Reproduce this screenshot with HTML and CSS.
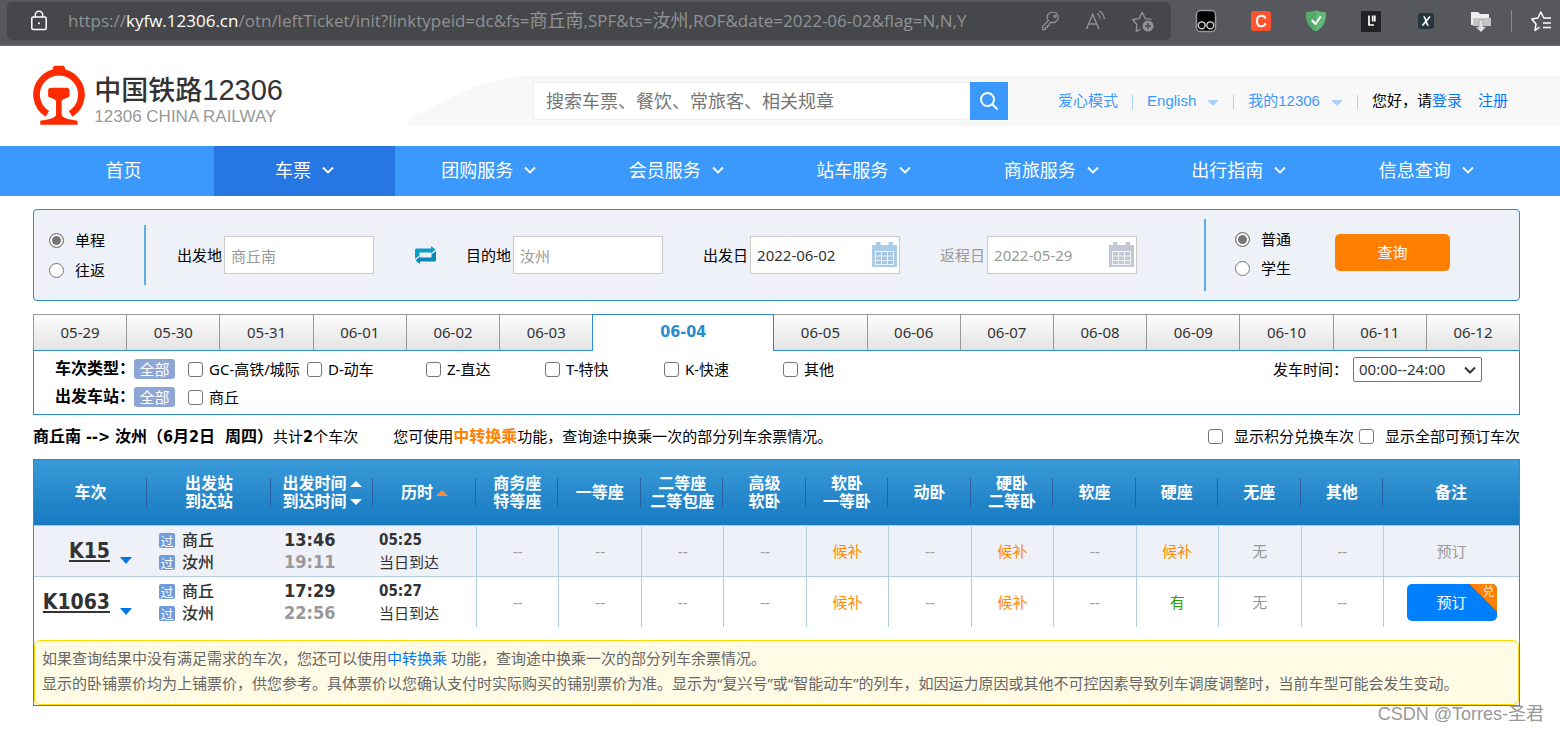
FILE: index.html
```html
<!DOCTYPE html>
<html lang="zh-CN">
<head>
<meta charset="utf-8">
<title>中国铁路12306</title>
<link rel="stylesheet" href="styles.css">
</head>
<body>
<div class="browser">
  <div class="address">
    <svg class="lock" width="18" height="22" viewBox="0 0 18 22" fill="none" stroke="#fff" stroke-width="1.5"><rect x="1.8" y="7" width="14.4" height="12.500" rx="1.500"/><path d="M5.300 7V5a3.700 3.700 0 0 1 7.400 0v2"/><circle cx="9" cy="13.200" r="1" fill="#fff" stroke="none"/></svg>
    <span class="url">https://<span class="host">kyfw.12306.cn</span>/otn/leftTicket/init?linktypeid=dc&amp;fs=<span class="url-cn">商丘南</span>,SPF&amp;ts=<span class="url-cn">汝州</span>,ROF&amp;date=2022-06-02&amp;flag=N,N,Y</span>
    <span class="address-tools">
      <svg width="20" height="22" viewBox="0 0 20 22" fill="none" stroke="#919295" stroke-width="1.300"><path d="M12.500 2.200a5.200 5.200 0 1 1-2.600 9.900L8.300 13.700v2H6.200v2H4.300v2H1.600v-3.300l5.800-5.800A5.200 5.200 0 0 1 12.500 2.200z" stroke-linejoin="round"/><circle cx="14" cy="6.200" r="1.100"/></svg>
      <svg width="22" height="22" viewBox="0 0 22 22" fill="none" stroke="#919295" stroke-width="1.400"><path d="M1.500 19 7.700 4.200 13.900 19M3.800 14h7.800"/><path d="M12 3.500c1.900 1.100 3 2.700 3.300 5M14.300 1c3 1.700 4.800 4.500 5.100 8"/></svg>
      <svg width="24" height="24" viewBox="0 0 24 24" fill="none" stroke="#919295" stroke-width="1.400" stroke-linejoin="round"><path d="M9.500 20.200 5.200 22.300l.8-6.600L1.600 10.800l6.400-1.200 3.200-6.300 3.100 6.300 6.400.8"/><circle cx="17" cy="17" r="5.500" fill="#919295" stroke="none"/><path d="M17 14v6M14 17h6" stroke="#46474a"/></svg>
    </span>
  </div>
  <div class="extensions">
    <svg width="22" height="24" viewBox="0 0 22 24"><rect x="1.500" y="1.500" width="19" height="21" rx="4" fill="#000" stroke="#999" stroke-width="1.500"/><g fill="#111" stroke="#ddd" stroke-width="1.300"><circle cx="6.700" cy="16.300" r="3.500"/><circle cx="15.300" cy="16.300" r="3.500"/></g></svg>
    <svg width="22" height="24" viewBox="0 0 22 24"><rect x="1" y="2" width="20" height="20" rx="3" fill="#ff5330"/><path d="M15.500 9.500C14.800 7.500 13.300 6.700 11.400 6.700 8.800 6.700 7 8.700 7 12s1.700 5.300 4.300 5.300c2.100 0 3.700-1 4.300-3" fill="none" stroke="#fff" stroke-width="2"/></svg>
    <svg width="22" height="24" viewBox="0 0 22 24"><path d="M11 1.500c3 1.200 6.500 1.600 10 1.700C21.300 12 18.500 18.500 11 22.500 3.500 18.500.7 12 1 3.200c3.500-.1 7-.5 10-1.700z" fill="#63b877"/><path d="M11 1.500c-3 1.200-6.500 1.600-10 1.700C.7 12 3.500 18.500 11 22.500z" fill="#56a96a"/><path d="m6.800 11 3.500 4 5.500-7.500" fill="none" stroke="#fff" stroke-width="2"/></svg>
    <svg width="22" height="24" viewBox="0 0 22 24"><rect x="1" y="2" width="20" height="21" fill="#222"/><path d="M9 6.500v9.500h5M12.700 6.500v6M14.800 6.500v6" fill="none" stroke="#fff" stroke-width="1.700"/></svg>
    <svg width="22" height="24" viewBox="0 0 22 24"><rect x="3" y="4" width="16" height="16" rx="3" fill="#26363f"/><path d="M8.500 7.500c2 0 3 9 5 9M15 7.500 7.500 16.500" fill="none" stroke="#fff" stroke-width="1.700"/></svg>
    <svg width="22" height="24" viewBox="0 0 22 24"><path d="M1 3h7l2 2h9v11H1z" fill="#eee"/><path d="M3 9h18v8H3z" fill="#c4c4c4"/><path d="M9 11h4v7h3l-5 5-5-5h3z" fill="#ddd" stroke="#999" stroke-width=".6"/></svg>
  </div>
  <span class="bar-divider"></span>
  <svg class="favorites" width="24" height="24" viewBox="0 0 24 24" fill="none" stroke="#fff" stroke-width="1.500" stroke-linejoin="round"><path d="M9.500 18.200 5 21.500 6 15 1.700 10 8 9l2.800-6 3 6H21M13 14h8M13 18.500h8"/></svg>
</div>

<header class="header">
  <a class="logo" href="#">
    <svg width="54" height="62" viewBox="0 0 54 62"><path d="M20 6V2.500L21.500.500h9.500L32.500 2.500V6z" fill="#ff2b00"/><path d="M14.500 49A22.700 22.700 0 1 1 38.100 49" fill="none" stroke="#ff2b00" stroke-width="6.800"/><path d="M15.300 26c0-2.500 1-3.300 3.200-3.300h15.300c2.200 0 3.200.8 3.200 3.300v5c0 2-8 2.500-8 5.500V50c0 3 8 5 16 6v4H7.300v-4c8-1 16-3 16-6V36.500c0-3-8-3.500-8-5.500z" fill="#ff2b00"/></svg>
    <span class="logo-text"><span class="logo-cn">中国铁路<span class="logo-num">12306</span></span><span class="logo-en">12306 CHINA RAILWAY</span></span>
  </a>
  <div class="header-band">
    <form class="search">
      <input class="search-input" type="text" aria-label="搜索" placeholder="搜索车票、餐饮、常旅客、相关规章">
      <button class="search-button" type="button" aria-label="搜索"><svg width="22" height="22" viewBox="0 0 22 22" fill="none" stroke="#fff" stroke-width="2"><circle cx="9.500" cy="9.500" r="6.500"/><path d="m14 14 5.500 5.500"/></svg></button>
    </form>
    <nav class="account">
      <a href="#">爱心模式</a><i class="pipe"></i>
      <a href="#">English<span class="caret"></span></a><i class="pipe"></i>
      <a href="#">我的12306<span class="caret"></span></a><i class="pipe"></i>
      <span class="hello">您好，请<a class="strong-link" href="#">登录</a></span><a class="strong-link register" href="#">注册</a>
    </nav>
  </div>
</header>

<nav class="main-nav">
  <a href="#">首页</a>
  <a class="current" href="#">车票<svg class="chev" width="12" height="8" viewBox="0 0 12 8"><path d="m1 1.500 5 5 5-5"/></svg></a>
  <a href="#">团购服务<svg class="chev" width="12" height="8" viewBox="0 0 12 8"><path d="m1 1.500 5 5 5-5"/></svg></a>
  <a href="#">会员服务<svg class="chev" width="12" height="8" viewBox="0 0 12 8"><path d="m1 1.500 5 5 5-5"/></svg></a>
  <a href="#">站车服务<svg class="chev" width="12" height="8" viewBox="0 0 12 8"><path d="m1 1.500 5 5 5-5"/></svg></a>
  <a href="#">商旅服务<svg class="chev" width="12" height="8" viewBox="0 0 12 8"><path d="m1 1.500 5 5 5-5"/></svg></a>
  <a href="#">出行指南<svg class="chev" width="12" height="8" viewBox="0 0 12 8"><path d="m1 1.500 5 5 5-5"/></svg></a>
  <a href="#">信息查询<svg class="chev" width="12" height="8" viewBox="0 0 12 8"><path d="m1 1.500 5 5 5-5"/></svg></a>
</nav>

<main class="content">
  <form class="query">
    <div class="radios">
      <label><input type="radio" name="trip" checked>单程</label>
      <label><input type="radio" name="trip">往返</label>
    </div>
    <div class="fields">
      <div class="field"><label for="from">出发地</label><input id="from" type="text" value="商丘南"></div>
      <button class="swap" type="button" aria-label="交换"><svg width="21" height="18" viewBox="0 0 21 18"><path d="M0 13V4q0-1.500 1.500-1.500H16V0l4.500 3.500L16 7.500V6.500H4.500v3z" fill="#0a9fcb"/><path d="M21 5v9q0 1.500-1.500 1.500H5V18L.5 14.500 5 10.500v1h11.500v-3z" fill="#0788b5"/></svg></button>
      <div class="field"><label for="to">目的地</label><input id="to" type="text" value="汝州"></div>
      <div class="field date"><label for="go">出发日</label><span class="date-box"><input id="go" class="dark" type="text" value="2022-06-02"><svg class="calendar" width="25" height="25" viewBox="0 0 25 25"><path d="M0 3h4V0h4.500v3h8V0H21v3h4v22H0z" fill="#a9cde9"/><path d="M3 9h19v14H3z" fill="#e9f3fb"/><path d="M4 10h5v3.500H4zm6 0h5v3.500h-5zm6 0h5v3.500h-5zM4 14.500h5V18H4zm6 0h5V18h-5zm6 0h5V18h-5zM4 19h5v3H4zm6 0h5v3h-5zm6 0h5v3h-5z" fill="#a5c6e2"/></svg></span></div>
      <div class="field date off"><label for="back">返程日</label><span class="date-box"><input id="back" type="text" value="2022-05-29"><svg class="calendar" width="25" height="25" viewBox="0 0 25 25"><path d="M0 3h4V0h4.500v3h8V0H21v3h4v22H0z" fill="#c3c7d4"/><path d="M3 9h19v14H3z" fill="#f2f3f7"/><path d="M4 10h5v3.500H4zm6 0h5v3.500h-5zm6 0h5v3.500h-5zM4 14.500h5V18H4zm6 0h5V18h-5zm6 0h5V18h-5zM4 19h5v3H4zm6 0h5v3h-5zm6 0h5v3h-5z" fill="#c3c7d4"/></svg></span></div>
    </div>
    <div class="radios kind">
      <label><input type="radio" name="kind" checked>普通</label>
      <label><input type="radio" name="kind">学生</label>
    </div>
    <button class="submit" type="button">查询</button>
  </form>

  <div class="tabs">
    <button type="button">05-29</button><button type="button">05-30</button><button type="button">05-31</button><button type="button">06-01</button><button type="button">06-02</button><button type="button">06-03</button><button class="active" type="button">06-04</button><button type="button">06-05</button><button type="button">06-06</button><button type="button">06-07</button><button type="button">06-08</button><button type="button">06-09</button><button type="button">06-10</button><button type="button">06-11</button><button type="button">06-12</button>
  </div>

  <section class="filters">
    <div class="filter-row">
      <b class="filter-name">车次类型：</b><button class="all" type="button">全部</button>
      <div class="options">
        <label><input type="checkbox">GC-高铁/城际</label>
        <label><input type="checkbox">D-动车</label>
        <label><input type="checkbox">Z-直达</label>
        <label><input type="checkbox">T-特快</label>
        <label><input type="checkbox">K-快速</label>
        <label><input type="checkbox">其他</label>
      </div>
      <label class="time-name" for="time">发车时间：</label>
      <span class="select-box"><select id="time"><option>00:00--24:00</option></select><svg class="select-arrow" width="12" height="8" viewBox="0 0 12 8"><path d="m1 1.500 5 5 5-5"/></svg></span>
    </div>
    <div class="filter-row">
      <b class="filter-name">出发车站：</b><button class="all" type="button">全部</button>
      <div class="options"><label><input type="checkbox">商丘</label></div>
    </div>
  </section>

  <div class="summary">
    <p class="route"><b>商丘南 --&gt; 汝州（6月2日&nbsp; 周四）</b>共计<b>2</b>个车次</p>
    <p class="transfer">您可使用<a href="#">中转换乘</a>功能，查询途中换乘一次的部分列车余票情况。</p>
    <label class="first-check"><input type="checkbox">显示积分兑换车次</label>
    <label><input type="checkbox">显示全部可预订车次</label>
  </div>

  <section class="results">
    <table>
      <colgroup><col class="c-train"><col class="c-station"><col class="c-time"><col class="c-last"><col span="11"><col class="c-note"></colgroup>
      <thead><tr>
        <th>车次</th><th>出发站<br>到达站</th>
        <th><span class="sort">出发时间<i class="up"></i></span><span class="sort">到达时间<i class="down"></i></span></th>
        <th><span class="sort">历时<i class="up orange"></i></span></th>
        <th>商务座<br>特等座</th><th>一等座</th><th>二等座<br>二等包座</th><th>高级<br>软卧</th><th>软卧<br>一等卧</th><th>动卧</th><th>硬卧<br>二等卧</th><th>软座</th><th>硬座</th><th>无座</th><th>其他</th><th>备注</th>
      </tr></thead>
      <tbody>
        <tr class="odd">
          <td class="train"><span class="train-box"><a href="#">K15</a><i></i></span></td>
          <td class="station"><span><em>过</em>商丘</span><span><em>过</em>汝州</span></td>
          <td class="time"><span>13:46</span><span class="arrive">19:11</span></td>
          <td class="last"><b>05:25</b><span>当日到达</span></td>
          <td class="seat">--</td><td class="seat">--</td><td class="seat">--</td><td class="seat">--</td><td class="seat wait">候补</td><td class="seat">--</td><td class="seat wait">候补</td><td class="seat">--</td><td class="seat wait">候补</td><td class="seat">无</td><td class="seat">--</td><td class="seat">预订</td>
        </tr>
        <tr>
          <td class="train"><span class="train-box"><a href="#">K1063</a><i></i></span></td>
          <td class="station"><span><em>过</em>商丘</span><span><em>过</em>汝州</span></td>
          <td class="time"><span>17:29</span><span class="arrive">22:56</span></td>
          <td class="last"><b>05:27</b><span>当日到达</span></td>
          <td class="seat">--</td><td class="seat">--</td><td class="seat">--</td><td class="seat">--</td><td class="seat wait">候补</td><td class="seat">--</td><td class="seat wait">候补</td><td class="seat">--</td><td class="seat have">有</td><td class="seat">无</td><td class="seat">--</td><td class="seat"><button class="book" type="button">预订<span class="corner">兑</span></button></td>
        </tr>
      </tbody>
    </table>
    <div class="tips">
      <p>如果查询结果中没有满足需求的车次，您还可以使用<a href="#">中转换乘</a> 功能，查询途中换乘一次的部分列车余票情况。</p>
      <p>显示的卧铺票价均为上铺票价，供您参考。具体票价以您确认支付时实际购买的铺别票价为准。显示为“复兴号”或“智能动车”的列车，如因运力原因或其他不可控因素导致列车调度调整时，当前车型可能会发生变动。</p>
    </div>
  </section>
</main>
<footer class="credit">CSDN @Torres-圣君</footer>
</body>
</html>
```

FILE: styles.css
```css
* { box-sizing: border-box; }
body {
  margin: 0;
  background: #fff;
  color: #000;
  font: 15px/20px "Noto Sans", "Noto Sans CJK SC", sans-serif;
}
a { text-decoration: none; }
p { margin: 0; }
button, input, select { font: inherit; margin: 0; padding: 0; }
button { border: 0; cursor: pointer; }
b { font-family: "DejaVu Sans Condensed", "Noto Sans CJK SC", sans-serif; }

input[type="radio"], input[type="checkbox"] {
  appearance: none;
  flex: none;
  width: 15px;
  height: 15px;
  border: 1px solid #767676;
  border-radius: 3px;
  background: #fff;
}
input[type="radio"] { border-radius: 50%; }
input[type="radio"]:checked {
  background: #757575;
  box-shadow: inset 0 0 0 2px #fff;
}

/* Browser bar */
.browser {
  display: flex;
  align-items: center;
  height: 46px;
  padding: 0 6px 4px 7px;
  background: #57585d;
  border-bottom: 1px solid #6c6d71;
}
.address {
  flex: 1;
  display: flex;
  align-items: center;
  height: 38px;
  padding: 0 16px 0 23px;
  border-radius: 5px;
  background: #46474a;
}
.url {
  flex: 1;
  margin-left: 20px;
  color: #919295;
  font: 17px/24px "Open Sans", "Noto Sans CJK SC", sans-serif;
  white-space: nowrap;
}
.url-cn { font-size: 18px; }
.host { color: #fff; }
.address-tools { display: flex; align-items: center; gap: 24px; }
.extensions { display: flex; gap: 33px; margin-left: 24px; }
.bar-divider { width: 1px; height: 22px; margin: 0 18px 0 19px; background: #8a8b8e; }

/* Header */
.header {
  display: flex;
  align-items: center;
  height: 100px;
  padding-left: 33px;
}
.header-band {
  flex: 1;
  display: flex;
  align-items: center;
  justify-content: space-between;
  height: 50px;
  margin: 10px 0 0 125px;
  padding: 0 52px 0 125px;
  background: #f8f8f8;
  clip-path: path("M0 49V46C0 43 3 41 7 39C45 22 75 0 124 0H4000V50H20z");
}
.logo {
  display: flex;
  align-items: center;
  gap: 8px;
  width: 250px;
  white-space: nowrap;
}
.logo-text { display: flex; flex-direction: column; padding-top: 8px; }
.logo-cn { color: #333; font: 500 27px/32px "Liberation Sans", "Noto Sans CJK SC", sans-serif; }
.logo-num { font-size: 29px; font-weight: 400; }
.logo-en { color: #999; font: 17px/20px "Liberation Sans", sans-serif; }
.search { display: flex; width: 475px; height: 38px; }
.search-input {
  flex: 1;
  min-width: 0;
  padding: 0 12px;
  border: 1px solid #eee;
  border-right: 0;
  background: #fff;
  font-size: 18px;
}
.search-input::placeholder { color: #757575; opacity: 1; }
.search-button {
  display: grid;
  place-items: center;
  width: 38px;
  background: #3b99fc;
}
.account {
  display: flex;
  align-items: center;
  font-family: "Liberation Sans", "Noto Sans CJK SC", sans-serif;
}
.account a { color: #3b99fc; }
.account .strong-link { color: #0077ff; }
.pipe { width: 1px; height: 14px; margin: 2px 14px 0; background: #a8d0fb; }
.caret {
  display: inline-block;
  margin-left: 11px;
  border: 6px solid transparent;
  border-top-color: #a8d0fb;
  border-bottom: 0;
}
.register { margin-left: 16px; }

/* Main navigation */
.main-nav {
  display: grid;
  grid-template-columns: 181px 181px repeat(6, 1fr);
  height: 50px;
  padding: 0 40px 0 33px;
  background: #3b99fc;
}
.main-nav a {
  display: flex;
  align-items: center;
  justify-content: center;
  gap: 11px;
  padding-bottom: 2px;
  color: #fff;
  font-size: 18px;
}
.main-nav .current { background: #2676e3; }
.chev path { fill: none; stroke: #fff; stroke-width: 1.8; }

.content { margin: 13px 40px 0 33px; }

/* Query form */
.query {
  display: flex;
  align-items: center;
  height: 92px;
  padding: 0 69px 0 15px;
  border: 1px solid #298cce;
  border-radius: 4px;
  background: #eef1f8;
}
.radios { display: flex; flex-direction: column; gap: 10px; }
.radios label { display: flex; align-items: center; gap: 11px; }
.fields {
  flex: 1;
  display: flex;
  align-items: center;
  height: 60px;
  margin-left: 39px;
  padding-left: 31px;
  border-left: 2px solid #5cb0e0;
}
.field { display: flex; align-items: center; gap: 2px; }
.field input {
  width: 150px;
  height: 38px;
  padding: 0 6px;
  border: 1px solid #ccc;
  background: #fff;
  color: #999;
}
.field .dark { color: #333; }
.off { color: #999; }
.date { margin-left: 40px; }
.date-box { position: relative; }
.calendar { position: absolute; right: 3px; top: 6px; }
.swap { display: flex; margin: 0 30px 0 41px; background: none; }
.kind {
  gap: 9px;
  justify-content: center;
  height: 72px;
  padding: 0 44px 3px 29px;
  border-left: 2px solid #5cb0e0;
}
.submit {
  width: 115px;
  height: 37px;
  margin-bottom: 6px;
  border-radius: 5px;
  background: #ff8000;
  color: #fff;
}

/* Date tabs */
.tabs { display: flex; height: 37px; margin-top: 13px; }
.tabs button {
  flex: 1;
  padding-bottom: 2px;
  border: solid #999;
  border-width: 1px 0 1px 1px;
  border-bottom-color: #298cce;
  background: linear-gradient(#fdfdfd, #e3e3e3);
  color: #333;
}
.tabs button:last-child { border-right-width: 1px; }
.tabs .active {
  flex: 0 0 182px;
  border: 1px solid #298cce;
  border-bottom: 0;
  background: #fff;
  color: #298cce;
  font-family: "DejaVu Sans Condensed", sans-serif;
  font-size: 16px;
  font-weight: bold;
}
.tabs .active + button { border-left: 0; }

/* Filters */
.filters {
  padding: 4px 37px 3px 21px;
  border: 1px solid #298cce;
  border-top: 0;
}
.filter-row { display: flex; align-items: center; height: 28px; }
.filter-name { width: 79px; font-size: 16px; white-space: nowrap; }
.all { width: 41px; height: 20px; border-radius: 3px; background: #8ea6d6; color: #fff; line-height: 20px; }
.options {
  flex: 1;
  display: grid;
  grid-template-columns: repeat(6, 119px);
  margin-left: 13px;
}
.options label { display: flex; align-items: center; gap: 6px; white-space: nowrap; }
.time-name { margin-right: 5px; }
.select-box { position: relative; }
.select-box select {
  appearance: none;
  display: block;
  width: 129px;
  height: 25px;
  padding: 0 5px;
  border: 1px solid #767676;
  border-radius: 2px;
  background: #fff;
  color: #333;
}
.select-arrow { position: absolute; right: 6px; top: 9px; }
.select-arrow path { fill: none; stroke: #333; stroke-width: 2; }

/* Summary */
.summary { display: flex; align-items: center; height: 44px; padding-bottom: 2px; white-space: nowrap; }
.summary label { display: flex; align-items: center; gap: 11px; margin-left: 5px; }
.summary .first-check { margin-left: auto; }
.route b { font-size: 16px; }
.transfer { margin-left: 35px; }
.transfer a { color: #ff8201; font-size: 16px; font-weight: bold; }

/* Result table */
.results { border: 1px solid #298cce; }
table { width: 100%; table-layout: fixed; border-collapse: separate; border-spacing: 0; }
.c-train { width: 113px; }
.c-station { width: 124px; }
.c-time { width: 102px; }
.c-last { width: 103px; }
.c-note { width: 136px; }
thead { background: linear-gradient(#399bd8, #1779c0); }
th {
  height: 65px;
  padding: 0;
  background: linear-gradient(#2a5fa5, #2a5fa5) right center / 1px 30px no-repeat;
  color: #fff;
  font: bold 16px/18px "Liberation Sans", "Noto Sans CJK SC", sans-serif;
  white-space: nowrap;
}
th:last-child { background: none; }
.sort { display: flex; align-items: center; justify-content: center; gap: 3px; }
.up, .down { border: 6px solid transparent; }
.up { border-top: 0; border-bottom-color: #fff; }
.down { border-bottom: 0; border-top-color: #fff; }
.orange { border-bottom-color: #f58b3c; }
td { height: 51px; padding: 0; border-top: 1px solid #b0cedd; }
.odd td { background: #eef1f8; }
td span, td b { display: block; line-height: 22px; }
td .train-box { display: flex; align-items: center; justify-content: flex-end; gap: 10px; padding-right: 15px; }
.train a {
  color: #333;
  font: bold 21px/24px "DejaVu Sans Condensed", sans-serif;
  text-decoration: underline;
}
.train i { margin-top: 18px; border: 6px solid transparent; border-top: 7px solid #0077e6; border-bottom: 0; }
.station { padding-left: 12px; color: #333; font-size: 16px; font-weight: 500; }
.station span { display: flex; align-items: center; gap: 7px; }
.station em {
  width: 16px;
  height: 15px;
  border-radius: 2px;
  background: #6f9bdc;
  color: #fff;
  font: 13px/15px "Noto Sans CJK SC", sans-serif;
  text-align: center;
}
.time { padding-left: 13px; color: #333; font: bold 18px/22px "DejaVu Sans Condensed", sans-serif; }
.time .arrive { color: #999; }
.last { padding-left: 6px; color: #333; }
.last b { font-size: 15px; }
.seat { border-left: 1px solid #b0cedd; color: #999; text-align: center; }
.wait { color: #ff8c00; }
.have { color: #26a306; }
.book {
  position: relative;
  width: 90px;
  height: 37px;
  border-radius: 5px;
  background: #007fff;
  color: #fff;
  overflow: hidden;
}
.book .corner {
  position: absolute;
  top: 0;
  right: 0;
  width: 28px;
  height: 27px;
  padding-right: 2px;
  background: linear-gradient(to top right, transparent 50%, #ff8000 50%);
  color: #fde3c8;
  font-size: 12px;
  line-height: 16px;
  text-align: right;
}
.tips {
  margin-top: 13px;
  padding: 5px 7px 8px;
  border: 1px solid #fbd800;
  border-radius: 6px;
  background: #fffbe5;
  color: #666;
  line-height: 25px;
}
.tips a { color: #0077ff; }
.credit {
  padding-right: 16px;
  color: #999;
  font: 18px/16px "Liberation Sans", "Noto Sans CJK SC", sans-serif;
  text-align: right;
}
```
